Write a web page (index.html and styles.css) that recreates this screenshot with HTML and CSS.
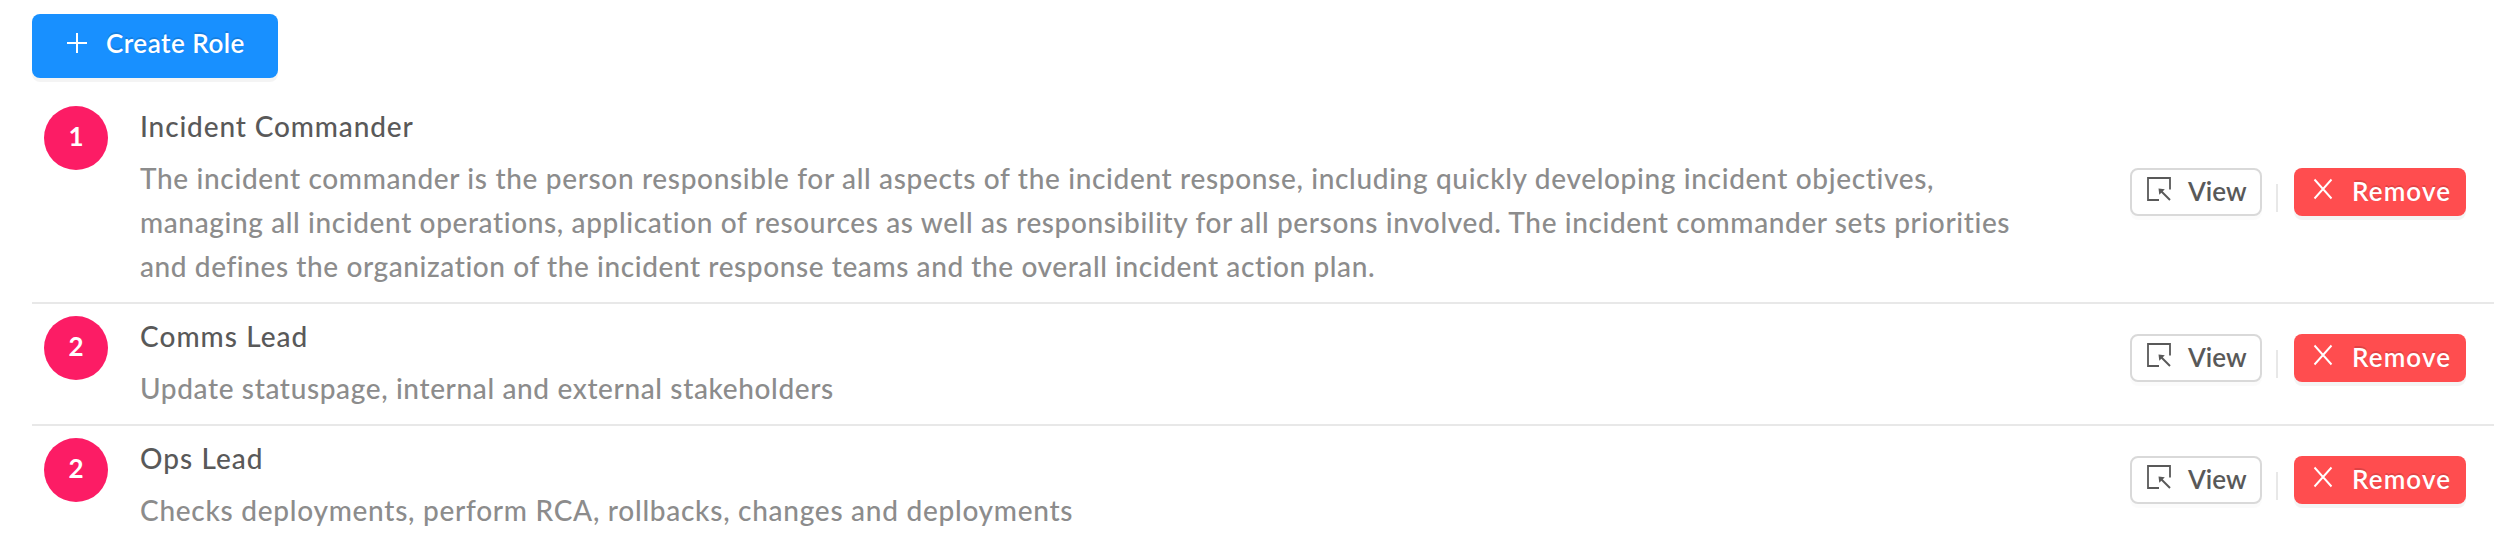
FILE: index.html
```
<!DOCTYPE html>
<html lang="en">
<head>
<meta charset="utf-8">
<title>Roles</title>
<link rel="stylesheet" href="styles.css">
</head>
<body>
<svg class="sprite" aria-hidden="true">
  <symbol id="select" viewBox="0 0 28 28">
    <path d="M14 25H3V3H25V14.500" fill="none" stroke="currentColor" stroke-width="1.8"/>
    <path d="M15.500 15.500L25 25" fill="none" stroke="currentColor" stroke-width="2"/>
    <path d="M13.500 13.500L19.800 14.300L14.300 19.800Z" fill="currentColor"/>
  </symbol>
  <symbol id="close" viewBox="0 0 28 28">
    <path d="M5.500 4.500L22.500 23.500M22.500 4.500L5.500 23.500" fill="none" stroke="currentColor" stroke-width="1.900"/>
  </symbol>
</svg>
<main class="roles">
  <button class="btn btn-primary">
    <svg class="icon" viewBox="0 0 28 28"><path d="M14 4V24M4 14H24" fill="none" stroke="currentColor" stroke-width="2"/></svg>
    <span class="create-label">Create Role</span>
  </button>
  <ul class="list">
    <li class="row">
      <span class="avatar">1</span>
      <div class="meta">
        <h4 class="title title-long">Incident Commander</h4>
        <p class="desc"><span class="line-1">The incident commander is the person responsible for all aspects of the incident response, including quickly developing incident objectives,</span><br><span class="line-2">managing all incident operations, application of resources as well as responsibility for all persons involved. The incident commander sets priorities</span><br><span class="line-3">and defines the organization of the incident response teams and the overall incident action plan.</span></p>
      </div>
      <div class="actions">
        <button class="btn btn-view"><svg class="icon"><use href="#select"/></svg><span>View</span></button>
        <i class="split"></i>
        <button class="btn btn-remove"><svg class="icon"><use href="#close"/></svg><span>Remove</span></button>
      </div>
    </li>
    <li class="row">
      <span class="avatar">2</span>
      <div class="meta">
        <h4 class="title">Comms Lead</h4>
        <p class="desc">Update statuspage, internal and external stakeholders</p>
      </div>
      <div class="actions">
        <button class="btn btn-view"><svg class="icon"><use href="#select"/></svg><span>View</span></button>
        <i class="split"></i>
        <button class="btn btn-remove"><svg class="icon"><use href="#close"/></svg><span>Remove</span></button>
      </div>
    </li>
    <li class="row">
      <span class="avatar">2</span>
      <div class="meta">
        <h4 class="title">Ops Lead</h4>
        <p class="desc desc-wide">Checks deployments, perform RCA, rollbacks, changes and deployments</p>
      </div>
      <div class="actions">
        <button class="btn btn-view"><svg class="icon"><use href="#select"/></svg><span>View</span></button>
        <i class="split"></i>
        <button class="btn btn-remove"><svg class="icon"><use href="#close"/></svg><span>Remove</span></button>
      </div>
    </li>
  </ul>
</main>
</body>
</html>
```

FILE: styles.css
```
* { box-sizing: border-box; }

body {
  margin: 0;
  background: #fff;
  font-family: Lato, "Open Sans", sans-serif;
  font-size: 28px;
  line-height: 44px;
  color: #595959;
}

.sprite { display: none; }

.roles { padding: 14px 26px 0 32px; }

.btn {
  display: flex;
  align-items: center;
  border: 0;
  border-radius: 8px;
  font: 600 26px/36px Lato, "Open Sans", sans-serif;
  white-space: nowrap;
}

.btn span { margin-top: 2px; }

.icon {
  display: block;
  flex: none;
  width: 28px;
  height: 28px;
}

.btn-primary {
  width: 246px;
  height: 64px;
  padding: 0 0 8px 31px;
  gap: 15px;
  background: #1890ff;
  color: #fff;
  box-shadow: 0 4px 0 rgba(0, 0, 0, 0.045);
  text-shadow: 0 -2px 0 rgba(0, 0, 0, 0.12);
}

.btn-primary .icon { margin-top: 2px; }

.create-label { letter-spacing: 0.5px; }

.list {
  list-style: none;
  margin: 16px 0 0;
  padding: 0;
}

.row {
  display: flex;
  padding: 12px 28px 12px 12px;
  border-bottom: 2px solid #e8e8e8;
}

.row:last-child { border-bottom: 0; }

.avatar {
  display: flex;
  align-items: center;
  justify-content: center;
  flex: none;
  width: 64px;
  height: 64px;
  padding-bottom: 4px;
  border-radius: 50%;
  background: #fc1c65;
  color: #fff;
  font-size: 26px;
  font-weight: 700;
}

.meta {
  flex: 1;
  margin: -2px 0 2px 32px;
  white-space: nowrap;
}

.title {
  margin: 0 0 8px;
  font-size: 28px;
  font-weight: 500;
  letter-spacing: 1.05px;
}

.title-long { letter-spacing: 0.87px; }

.desc {
  margin: 0;
  color: #8c8c8c;
  font-weight: 500;
  letter-spacing: 0.63px;
}

.desc-wide { letter-spacing: 0.73px; }
.line-1 { letter-spacing: 0.66px; }
.line-2 { letter-spacing: 0.62px; }
.line-3 { letter-spacing: 0.59px; }

.actions {
  display: flex;
  align-items: center;
  padding-bottom: 12px;
}

.btn-view,
.btn-remove {
  height: 48px;
  padding: 0 0 4px;
}

.btn-view {
  width: 132px;
  padding-left: 13px;
  gap: 15px;
  border: 2px solid #d9d9d9;
  background: #fff;
  color: #595959;
  box-shadow: 0 4px 0 rgba(0, 0, 0, 0.015);
}

.btn-remove {
  width: 172px;
  padding-left: 15px;
  gap: 15px;
  background: #ff4d4f;
  color: #fff;
  letter-spacing: 1.1px;
  box-shadow: 0 4px 0 rgba(0, 0, 0, 0.045);
  text-shadow: 0 -2px 0 rgba(0, 0, 0, 0.12);
}

.btn-view .icon,
.btn-remove .icon { margin-top: -2px; }

.split {
  width: 2px;
  height: 28px;
  margin: 12px 16px 0 14px;
  background: #e8e8e8;
}
```
